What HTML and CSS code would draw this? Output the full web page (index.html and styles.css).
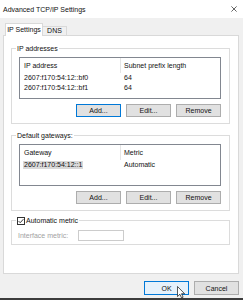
FILE: index.html
```html
<!DOCTYPE html>
<html lang="en">
<head>
    <meta charset="UTF-8">
    <meta name="viewport" content="width=device-width, initial-scale=1.0">
    <title>Advanced TCP/IP Settings</title>
    <link rel="stylesheet" href="styles.css">
</head>
<body>

    <div class="titlebar">
        <span class="title">Advanced TCP/IP Settings</span>
        <svg class="close" width="6" height="6" viewBox="0 0 6 6">
            <path d="M0.4 0.4L5.6 5.6M5.6 0.4L0.4 5.6" stroke="#222" stroke-width="0.7" fill="none"/>
        </svg>
    </div>

    <div class="tabs">
        <div class="tab active">IP Settings</div>
        <div class="tab dns">DNS</div>
    </div>

    <div class="panel">
        <!-- IP addresses -->
        <fieldset class="group">
            <legend>IP addresses</legend>
            <div class="list">
                <div class="list-head">
                    <span class="col1">IP address</span>
                    <span class="col2">Subnet prefix length</span>
                </div>
                <div class="list-row">
                    <span class="col1">2607:f170:54:12::bf0</span>
                    <span class="col2">64</span>
                </div>
                <div class="list-row">
                    <span class="col1">2607:f170:54:12::bf1</span>
                    <span class="col2">64</span>
                </div>
            </div>
            <div class="btn-row">
                <button class="btn default">Add...</button>
                <button class="btn">Edit...</button>
                <button class="btn">Remove</button>
            </div>
        </fieldset>

        <!-- Default gateways -->
        <fieldset class="group">
            <legend>Default gateways:</legend>
            <div class="list">
                <div class="list-head">
                    <span class="col1">Gateway</span>
                    <span class="col2">Metric</span>
                </div>
                <div class="list-row">
                    <span class="col1"><span class="sel">2607:f170:54:12::1</span></span>
                    <span class="col2">Automatic</span>
                </div>
            </div>
            <div class="btn-row">
                <button class="btn">Add...</button>
                <button class="btn">Edit...</button>
                <button class="btn">Remove</button>
            </div>
        </fieldset>

        <!-- Automatic metric -->
        <fieldset class="group metric">
            <legend>
                <span class="check">
                    <svg width="8" height="8" viewBox="0 0 8 8">
                        <rect x="0.5" y="0.5" width="7" height="7" fill="#fff" stroke="#333"/>
                        <path d="M1.6 4.1L3.2 5.7L6.4 2.2" stroke="#222" stroke-width="0.9" fill="none"/>
                    </svg>
                    Automatic metric
                </span>
            </legend>
            <div class="field">
                <span class="field-label">Interface metric:</span>
                <span class="input"></span>
            </div>
        </fieldset>
    </div>

    <div class="footer">
        <button class="btn hover">OK</button>
        <button class="btn">Cancel</button>
    </div>

    <div class="taskbar"></div>

    <svg class="cursor" width="9" height="13" viewBox="0 0 9 13">
        <path d="M0.5 0.5L0.5 10.5L2.9 8.3L4.6 11.9L6.1 11.2L4.5 7.7L7.6 7.7Z" fill="#fff" stroke="#111" stroke-width="0.7" stroke-linejoin="round"/>
    </svg>

</body>
</html>
```

FILE: styles.css
```css
body {
    margin: 0;
    width: 243px;
    height: 300px;
    overflow: hidden;
    position: relative;
    display: flex;
    flex-direction: column;
    background-color: #f0f0f0;
    font-family: 'Liberation Sans', Arial, sans-serif;
    font-size: 7px;
    color: #111;
}

.titlebar {
    height: 18px;
    display: flex;
    align-items: center;
    justify-content: space-between;
    padding: 0 6px 0 3px;
    background-color: #fff;
}

.tabs {
    display: flex;
    align-items: flex-end;
    height: 12px;
    margin-top: 5px;
    padding-left: 5px;
}

.tab {
    height: 8px;
    line-height: 8px;
    text-align: center;
    border: 1px solid #d9d9d9;
    border-bottom: none;
    background-color: #f0f0f0;
}

.tab.active {
    width: 36px;
    height: 12px;
    line-height: 12px;
    margin-bottom: -1px;
    background-color: #fff;
    position: relative;
    z-index: 1;
}

.tab.dns {
    width: 23px;
    border-left: none;
}

.panel {
    height: 239px;
    box-sizing: border-box;
    margin: 0 4px 0 3px;
    padding: 8px 8px 0 7px;
    border: 1px solid #d9d9d9;
    background-color: #fff;
}

.group {
    margin: 0;
    min-width: 0;
    padding: 4px 8px 6px 7px;
    border: 1px solid #dcdcdc;
}

.group + .group {
    margin-top: 7px;
}

.group legend {
    padding: 0 1px;
    margin-left: -3px;
    line-height: 9px;
}

.list {
    height: 42px;
    box-sizing: border-box;
    border: 1px solid #828790;
    background-color: #fff;
}

.list-head {
    display: flex;
    height: 15px;
    line-height: 15px;
}

.list-row {
    display: flex;
    height: 10px;
    line-height: 10px;
}

.col1 {
    width: 101px;
    box-sizing: border-box;
    padding-left: 4px;
    white-space: nowrap;
}

.list-head .col1 {
    border-right: 1px solid #e5e5e5;
}

.col2 {
    padding-left: 3px;
    white-space: nowrap;
}

.sel {
    display: inline-block;
    line-height: 8px;
    padding: 0 1px;
    margin-left: -1px;
    background-color: #d9d9d9;
}

.btn-row {
    display: flex;
    justify-content: flex-end;
    gap: 5px;
    margin-top: 5px;
}

.btn {
    width: 45px;
    height: 13px;
    padding: 0;
    font-family: inherit;
    font-size: 7px;
    color: #111;
    background-color: #e1e1e1;
    border: 1px solid #adadad;
}

.btn.default {
    border-color: #0078d7;
}

.btn.hover {
    background-color: #e5f1fb;
    border-color: #0078d7;
}

.group.metric {
    margin-top: 5px;
    padding: 5px 8px 3px 6px;
}

.group.metric legend {
    margin-left: -2px;
}

.check {
    display: flex;
    align-items: center;
    gap: 1px;
}

.field {
    display: flex;
    align-items: center;
    height: 11px;
}

.field-label {
    width: 60px;
    color: #a2a2a2;
}

.input {
    width: 46px;
    height: 11px;
    box-sizing: border-box;
    border: 1px solid #cccccc;
    background-color: #fff;
}

.footer {
    display: flex;
    justify-content: flex-end;
    gap: 5px;
    margin-top: 7px;
    padding-right: 4px;
}

.footer .btn {
    height: 14px;
}

.taskbar {
    margin-top: auto;
    height: 2px;
    background-color: #3c3c3c;
}

.cursor {
    position: absolute;
    left: 177px;
    top: 286px;
}
```
